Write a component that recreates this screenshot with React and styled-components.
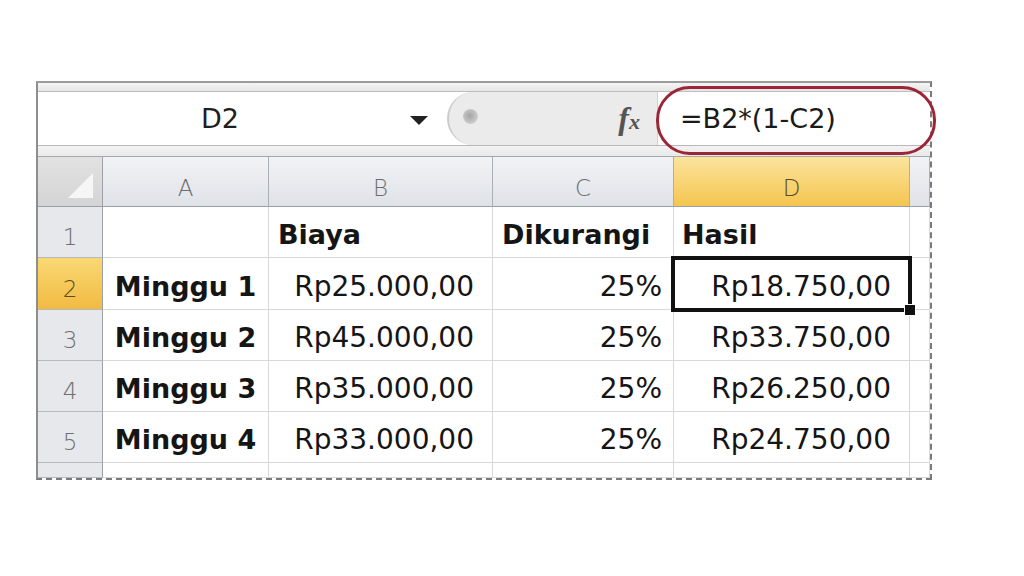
import React from "react";
import styled, { createGlobalStyle, css } from "styled-components";

const GlobalStyle = createGlobalStyle`
  html, body { margin: 0; padding: 0; background: #ffffff; }
  body { font-family: "DejaVu Sans", "Liberation Sans", sans-serif; }
`;

const Page = styled.div`
  width: 1024px;
  height: 576px;
  box-sizing: border-box;
  padding: 81px 0 0 36px;
  background: #fff;
`;

const Sheet = styled.div`
  position: relative;
  width: 896px;
  box-sizing: border-box;
  border-left: 2px solid #8e8e8e;
  border-top: 2px solid #9c9c9c;
  border-right: 2px dashed #7a7a7a;
  border-bottom: 2px dashed #7a7a7a;
  display: flex;
  flex-direction: column;
`;

const TopBand = styled.div`
  height: 9px;
  box-sizing: border-box;
  background: linear-gradient(#f4f4f4, #e6e6e6);
  border-bottom: 1px solid #bdbdbd;
`;

const FormulaBar = styled.div`
  height: 53px;
  display: flex;
  background: #fff;
`;

const NameBox = styled.div`
  width: 409px;
  display: flex;
  align-items: center;
  background: #fff;
`;

const NameText = styled.div`
  flex: 1;
  text-align: center;
  font-size: 27px;
  color: #1f1f1f;
  padding-left: 4px;
`;

const ArrowBox = styled.div`
  width: 49px;
  display: flex;
  align-items: center;
  justify-content: flex-start;
  padding-left: 12px;
  box-sizing: border-box;
`;

const Arrow = styled.div`
  width: 0;
  height: 0;
  border-left: 9px solid transparent;
  border-right: 9px solid transparent;
  border-top: 9px solid #222;
  margin-top: 4px;
`;

const Grip = styled.div`
  width: 211px;
  box-sizing: border-box;
  display: flex;
  align-items: center;
  justify-content: space-between;
  background: #ebebeb;
  border-left: 2px solid #cbcbcb;
  border-radius: 28px 0 0 28px;
  padding: 0 17px 0 14px;
  border-right: 1px solid #d2d2d2;
`;

const GripDot = styled.div`
  width: 15px;
  height: 15px;
  border-radius: 50%;
  background: radial-gradient(circle at 45% 45%, #a4a4a4, #c4c4c4 55%, #e2e2e2);
  margin-top: -4px;
`;

const Fx = styled.div`
  font-family: "Liberation Serif", "DejaVu Serif", serif;
  font-style: italic;
  font-weight: bold;
  color: #555;
  font-size: 32px;
  line-height: 1;
  display: flex;
  align-items: baseline;
  margin-top: -2px;
  span {
    font-size: 22px;
    margin-left: 0px;
  }
`;

const FormulaInput = styled.div`
  position: relative;
  flex: 1;
  display: flex;
  align-items: center;
  padding-left: 22px;
  background: #fff;
  font-size: 27px;
  color: #1a1a1a;
  white-space: nowrap;
`;

const Highlight = styled.div`
  position: absolute;
  left: -2px;
  right: -6px;
  top: -6px;
  bottom: -10px;
  border: 3px solid #9a2636;
  border-radius: 34px;
  pointer-events: none;
  z-index: 3;
`;

const Strip = styled.div`
  height: 12px;
  box-sizing: border-box;
  background: linear-gradient(#f3f3f3, #e9e9e9);
  border-top: 1px solid #b8b8b8;
  border-bottom: 1px solid #a8a8a8;
`;

const Grid = styled.div`
  display: grid;
  grid-template-columns: 65px 166px 224px 181px 236px 1fr;
  grid-template-rows: 50px 51px 52px 51px 51px 51px 15px;
`;

const headBase = css`
  box-sizing: border-box;
  display: flex;
  align-items: flex-end;
  justify-content: center;
  font-size: 23px;
  line-height: 23px;
  font-weight: 300;
  padding-bottom: 6px;
`;

const ColHead = styled.div`
  ${headBase}
  border-right: 1px solid #aab0b8;
  border-bottom: 1px solid #9aa0a8;
  background: ${(p) =>
    p.$active
      ? "linear-gradient(#fbe49e, #f5c54f)"
      : "linear-gradient(#f1f3f6, #dfe2e7)"};
  color: ${(p) => (p.$active ? "#5b4a1e" : "#6e6e6e")};
`;

const Corner = styled.div`
  box-sizing: border-box;
  background: linear-gradient(#e2e2e2, #d4d4d4);
  border-right: 1px solid #9ca1a8;
  border-bottom: 1px solid #9aa0a8;
  display: flex;
  align-items: flex-end;
  justify-content: flex-end;
  padding: 0 9px 8px 0;
`;

const CornerTriangle = styled.div`
  width: 0;
  height: 0;
  border-left: 25px solid transparent;
  border-bottom: 25px solid #f6f6f6;
`;

const RowHead = styled.div`
  ${headBase}
  padding-bottom: 8px;
  border-right: 1px solid #9ca1a8;
  border-bottom: 1px solid #b6bac0;
  background: ${(p) =>
    p.$active ? "linear-gradient(#f9d873, #f2bb42)" : "#e6e8ec"};
  color: ${(p) => (p.$active ? "#5b4a1e" : "#6e6e6e")};
`;

const Cell = styled.div`
  position: relative;
  box-sizing: border-box;
  display: flex;
  align-items: flex-end;
  justify-content: ${(p) =>
    p.$align === "right" ? "flex-end" : p.$align === "center" ? "center" : "flex-start"};
  padding: 0 ${(p) => p.$padR || 0}px 8px ${(p) => p.$padL || 0}px;
  border-right: 1px solid #d8d8d8;
  border-bottom: 1px solid #d8d8d8;
  background: #fff;
  font-size: ${(p) => (p.$bold ? 27 : 28)}px;
  line-height: 28px;
  font-weight: ${(p) => (p.$bold ? "bold" : "normal")};
  color: #151515;
  white-space: nowrap;
  z-index: ${(p) => (p.$selected ? 2 : "auto")};
`;

const Selection = styled.div`
  position: absolute;
  left: -3px;
  top: -2px;
  right: -3px;
  bottom: -3px;
  border: 4px solid #111;
  pointer-events: none;
  z-index: 2;
`;

const FillHandle = styled.div`
  position: absolute;
  right: -8px;
  bottom: -8px;
  width: 12px;
  height: 12px;
  background: #111;
  border: 1px solid #fff;
  box-sizing: border-box;
`;

const columns = ["A", "B", "C", "D"];

const rows = [
  {
    n: 1,
    cells: [
      { t: "" },
      { t: "Biaya", bold: true, padL: 9 },
      { t: "Dikurangi", bold: true, padL: 9 },
      { t: "Hasil", bold: true, padL: 8 },
    ],
  },
  {
    n: 2,
    cells: [
      { t: "Minggu 1", bold: true, align: "center" },
      { t: "Rp25.000,00", align: "right", padR: 18 },
      { t: "25%", align: "right", padR: 11 },
      { t: "Rp18.750,00", align: "right", padR: 18, selected: true },
    ],
  },
  {
    n: 3,
    cells: [
      { t: "Minggu 2", bold: true, align: "center" },
      { t: "Rp45.000,00", align: "right", padR: 18 },
      { t: "25%", align: "right", padR: 11 },
      { t: "Rp33.750,00", align: "right", padR: 18 },
    ],
  },
  {
    n: 4,
    cells: [
      { t: "Minggu 3", bold: true, align: "center" },
      { t: "Rp35.000,00", align: "right", padR: 18 },
      { t: "25%", align: "right", padR: 11 },
      { t: "Rp26.250,00", align: "right", padR: 18 },
    ],
  },
  {
    n: 5,
    cells: [
      { t: "Minggu 4", bold: true, align: "center" },
      { t: "Rp33.000,00", align: "right", padR: 18 },
      { t: "25%", align: "right", padR: 11 },
      { t: "Rp24.750,00", align: "right", padR: 18 },
    ],
  },
];

export default function App() {
  return (
    <Page>
      <GlobalStyle />
      <Sheet>
        <TopBand />
        <FormulaBar>
          <NameBox>
            <NameText>D2</NameText>
            <ArrowBox>
              <Arrow />
            </ArrowBox>
          </NameBox>
          <Grip>
            <GripDot />
            <Fx>
              f<span>x</span>
            </Fx>
          </Grip>
          <FormulaInput>
            =B2*(1-C2)
            <Highlight />
          </FormulaInput>
        </FormulaBar>
        <Strip />
        <Grid>
          <Corner>
            <CornerTriangle />
          </Corner>
          {columns.map((c) => (
            <ColHead key={c} $active={c === "D"}>
              {c}
            </ColHead>
          ))}
          <ColHead />
          {rows.map((r) => (
            <React.Fragment key={r.n}>
              <RowHead $active={r.n === 2}>{r.n}</RowHead>
              {r.cells.map((c, i) => (
                <Cell
                  key={i}
                  $align={c.align}
                  $bold={c.bold}
                  $padL={c.padL}
                  $padR={c.padR}
                  $selected={c.selected}
                >
                  {c.t}
                  {c.selected && (
                    <Selection>
                      <FillHandle />
                    </Selection>
                  )}
                </Cell>
              ))}
              <Cell />
            </React.Fragment>
          ))}
          <RowHead />
          <Cell />
          <Cell />
          <Cell />
          <Cell />
          <Cell />
        </Grid>
      </Sheet>
    </Page>
  );
}
